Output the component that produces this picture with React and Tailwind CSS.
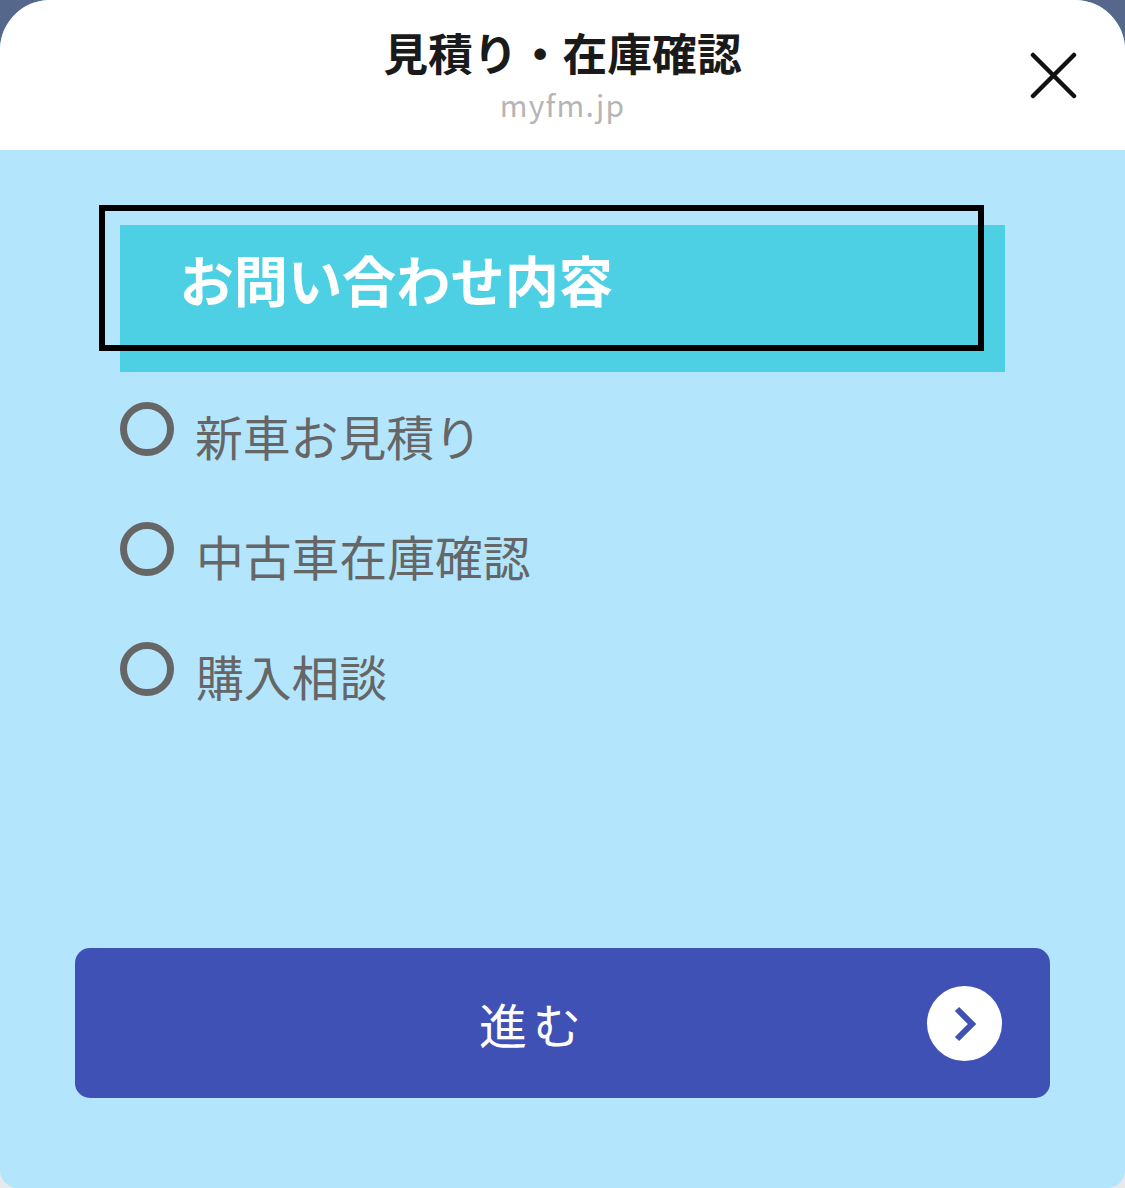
import React from 'react';

const jp = 'font-["Noto_Sans_CJK_JP","Noto_Sans",sans-serif]';

const options = [
  { label: '新車お見積り', gap: 'ml-[21px]' },
  { label: '中古車在庫確認', gap: 'ml-[22px]' },
  { label: '購入相談', gap: 'ml-[22px]' },
];

const App = () => {
  return (
    <div className={`w-[1125px] h-[1188px] overflow-hidden bg-[linear-gradient(#55678a_50%,#e9e9e9_50%)] ${jp}`}>
      <div className="h-full flex flex-col rounded-t-[50px] rounded-b-[18px] overflow-hidden bg-[#b3e5fc]">
        {/* Header */}
        <header className="relative h-[150px] shrink-0 bg-white flex flex-col items-center">
          <h1 className="mt-[21px] text-[44.8px] leading-[62px] font-bold text-[#1a1a1a] whitespace-nowrap">
            見積り・在庫確認
          </h1>
          <p className="text-[30px] leading-[44px] -mt-[1px] tracking-[1.2px] text-[#b5b5b5]">myfm.jp</p>
          <button className="absolute left-[1030px] top-[52px] w-[47px] h-[47px]" aria-label="閉じる">
            <svg viewBox="0 0 47 47" className="w-full h-full" fill="none" stroke="#111" strokeWidth="4.5" strokeLinecap="round">
              <path d="M3 3 L44 44 M44 3 L3 44" />
            </svg>
          </button>
        </header>

        {/* Content */}
        <main className="flex-1 flex flex-col">
          <div className="relative mt-[75px] ml-[120px] w-[885px] h-[147px] bg-[#4dd0e4]">
            <div className="absolute -left-[21px] -top-[20px] w-[885px] h-[146px] border-[6px] border-black"></div>
            <h2 className="pl-[59.5px] pt-[16px] text-[54.2px] leading-[76px] font-bold text-white whitespace-nowrap">
              お問い合わせ内容
            </h2>
          </div>

          <div className="mt-[30px] ml-[120px] flex flex-col gap-[66px]">
            {options.map((option) => (
              <label key={option.label} className="flex items-start h-[54px]">
                <span className="w-[54px] h-[54px] shrink-0 rounded-full border-[7px] border-[#666666]"></span>
                <span className={`${option.gap} text-[47.8px] leading-[68px] text-[#666666] whitespace-nowrap`}>
                  {option.label}
                </span>
              </label>
            ))}
          </div>

          <button className="relative mt-[252px] ml-[75px] w-[975px] h-[150px] rounded-[15px] bg-[#3f51b5] flex items-center justify-center">
            <span className="-ml-[59px] text-[48px] leading-[68px] tracking-[6px] text-white">進む</span>
            <span className="absolute left-[852px] top-[38px] w-[75px] h-[75px] rounded-full bg-white flex items-center justify-center">
              <svg viewBox="0 0 24 36" className="w-[24px] h-[36px] ml-[2px]" fill="none" stroke="#3f51b5" strokeWidth="6">
                <path d="M3 3 L18 18 L3 33" />
              </svg>
            </span>
          </button>
        </main>
      </div>
    </div>
  );
};

export default App;
